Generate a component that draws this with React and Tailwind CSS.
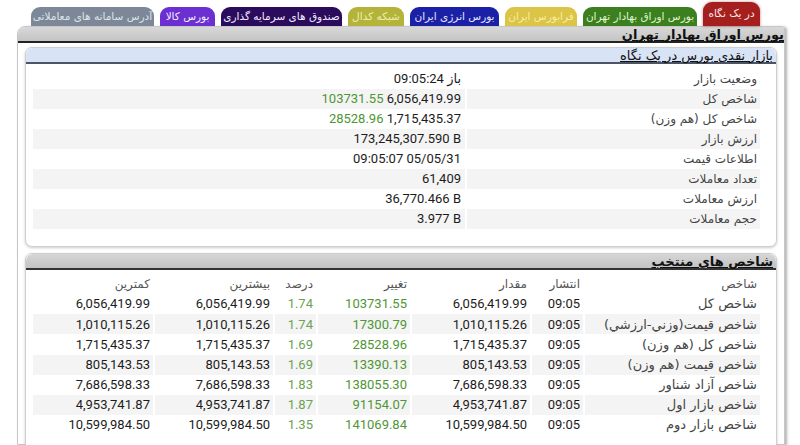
import clsx from "clsx";

const tabs = [
  { label: "در یک نگاه", cls: "w-[57px] h-[24px] bg-[#a51f1f] text-[#fde8e8] shadow-[0_0_3px_rgba(120,0,0,0.5)]" },
  { label: "بورس اوراق بهادار تهران", cls: "w-[114px] h-[19px] bg-[#3c7f1e] text-[#dff5cf]" },
  { label: "فرابورس ایران", cls: "w-[72px] h-[19px] bg-[#dcc447] text-[#f6eea8]" },
  { label: "بورس انرژی ایران", cls: "w-[89px] h-[19px] bg-[#1b21a6] text-[#e3e6ff]" },
  { label: "شبکه کدال", cls: "w-[56px] h-[19px] bg-[#b4b43a] text-[#eeeeb0]" },
  { label: "صندوق های سرمایه گذاری", cls: "w-[121px] h-[19px] bg-[#2a0b5c] text-[#f1eaff]" },
  { label: "بورس کالا", cls: "w-[55px] h-[19px] bg-[#6b2fd2] text-[#f3ecff]" },
  { label: "آدرس سامانه های معاملاتی", cls: "w-[123px] h-[19px] bg-[#7c8898] text-[#dde3ea]" },
];

// بازار نقدی: [label, value, green part]
const summary = [
  ["وضعیت بازار", "09:05:24 باز", null],
  ["شاخص کل", "6,056,419.99", "103731.55"],
  ["شاخص کل (هم وزن)", "1,715,435.37", "28528.96"],
  ["ارزش بازار", "173,245,307.590 B", null],
  ["اطلاعات قیمت", "09:05:07 05/05/31", null],
  ["تعداد معاملات", "61,409", null],
  ["ارزش معاملات", "36,770.466 B", null],
  ["حجم معاملات", "3.977 B", null],
];

const heads = ["شاخص", "انتشار", "مقدار", "تغییر", "درصد", "بیشترین", "کمترین"];
const widths = ["w-[177px]", "w-[53px]", "w-[120px]", "w-[94px]", "w-[43px]", "w-[120px]", "w-[120px]"];

const indices = [
  ["شاخص کل", "09:05", "6,056,419.99", "103731.55", "1.74", "6,056,419.99", "6,056,419.99"],
  ["شاخص قیمت(وزني-ارزشي)", "09:05", "1,010,115.26", "17300.79", "1.74", "1,010,115.26", "1,010,115.26"],
  ["شاخص کل (هم وزن)", "09:05", "1,715,435.37", "28528.96", "1.69", "1,715,435.37", "1,715,435.37"],
  ["شاخص قیمت (هم وزن)", "09:05", "805,143.53", "13390.13", "1.69", "805,143.53", "805,143.53"],
  ["شاخص آزاد شناور", "09:05", "7,686,598.33", "138055.30", "1.83", "7,686,598.33", "7,686,598.33"],
  ["شاخص بازار اول", "09:05", "4,953,741.87", "91154.07", "1.87", "4,953,741.87", "4,953,741.87"],
  ["شاخص بازار دوم", "09:05", "10,599,984.50", "141069.84", "1.35", "10,599,984.50", "10,599,984.50"],
];

function cellColor(i) {
  if (i === 0) return "text-[#444] text-[12px] font-['DejaVu_Sans',sans-serif]";
  if (i === 3) return "text-[#4f9634]";
  if (i === 4) return "text-[#6aa352]";
  return "text-[#1c1c1c]";
}

export default function App() {
  return (
    <div
      dir="rtl"
      className="w-[800px] h-[445px] overflow-hidden bg-white font-['Roboto','DejaVu_Sans',sans-serif] text-[#1c1c1c]"
    >
      {/* tabs */}
      <div className="flex items-end h-[26px] pr-[40px] gap-[6px]">
        {tabs.map((t) => (
          <div
            key={t.label}
            className={clsx(
              "rounded-t-[9px] flex items-center justify-center whitespace-nowrap text-[10.5px] font-['DejaVu_Sans',sans-serif]",
              t.cls
            )}
          >
            {t.label}
          </div>
        ))}
      </div>

      {/* frame */}
      <div className="ml-[17px] mr-[15px] h-[419px] bg-white border border-[#c6c6c6] rounded-tl-[8px] rounded-tr-[3px] shadow-[2px_1px_3px_rgba(0,0,0,0.3)]">
        <div className="h-[16px] flex items-center bg-gradient-to-b from-[#d8d8d8] to-[#c4c4c4] border-b-2 border-[#222] rounded-tl-[7px]">
          <span className="text-[13px] font-bold underline leading-none font-['DejaVu_Sans',sans-serif] text-[#111]">
            بورس اوراق بهادار تهران
          </span>
        </div>

        <div className="px-[7px] pt-[4px]">
          {/* card 1 */}
          <div className="border border-[#cfcfcf] rounded-[7px] shadow-[0_1px_3px_rgba(0,0,0,0.2)] bg-white">
            <div className="h-[16px] flex items-center pr-[3px] bg-[#d9e3f6] rounded-t-[7px] border-b-2 border-[#4c5566]">
              <span className="text-[13px] underline leading-none font-['DejaVu_Sans',sans-serif] text-[#111]">
                بازار نقدی بورس در یک نگاه
              </span>
            </div>
            <div className="pl-[7px] pr-[16px] pt-[5px] pb-[17px]">
              {summary.map(([label, value, green], i) => (
                <div key={label} className="flex h-[20px] items-center">
                  <div
                    className={clsx(
                      "w-[295px] h-full flex items-center pr-[3px] text-[12px] text-[#444] font-['DejaVu_Sans',sans-serif] border-l-2 border-white",
                      i % 2 === 1 && "bg-[#f4f4f4]"
                    )}
                  >
                    {label}
                  </div>
                  <div
                    dir="ltr"
                    className={clsx(
                      "flex-1 h-full flex items-center justify-end pr-[4px] text-[13px] whitespace-pre",
                      i % 2 === 1 && "bg-[#f4f4f4]"
                    )}
                  >
                    {green && <span className="text-[#4f9634]">{green} </span>}
                    <span>{value}</span>
                  </div>
                </div>
              ))}
            </div>
          </div>

          {/* card 2 */}
          <div className="mt-[6px] border border-[#cfcfcf] rounded-[7px] shadow-[0_1px_3px_rgba(0,0,0,0.2)] bg-white h-[200px]">
            <div className="h-[16px] flex items-center pr-[3px] bg-gradient-to-b from-[#d6d6d6] to-[#c3c3c3] rounded-t-[7px] border-b-2 border-[#333]">
              <span className="text-[13px] font-bold underline leading-none font-['DejaVu_Sans',sans-serif] text-[#111]">
                شاخص های منتخب
              </span>
            </div>
            <div className="pl-[7px] pr-[16px] pt-[4px]">
              <div className="flex h-[20px] items-center">
                {heads.map((h, i) => (
                  <div
                    key={h}
                    className={clsx(
                      widths[i],
                      "h-full flex items-center pr-[3px] text-[12px] text-[#555] font-['DejaVu_Sans',sans-serif]"
                    )}
                  >
                    {h}
                  </div>
                ))}
              </div>
              {indices.map((row, r) => (
                <div key={row[0]} className="flex h-[20.2px] items-center">
                  {row.map((c, i) => (
                    <div
                      key={i}
                      className={clsx(
                        widths[i],
                        "h-full flex items-center pr-[3px] text-[13px] whitespace-nowrap",
                        i < 6 && "border-l-2 border-white",
                        r % 2 === 1 && "bg-[#f4f4f4]",
                        cellColor(i)
                      )}
                    >
                      {c}
                    </div>
                  ))}
                </div>
              ))}
            </div>
          </div>
        </div>
      </div>
    </div>
  );
}
